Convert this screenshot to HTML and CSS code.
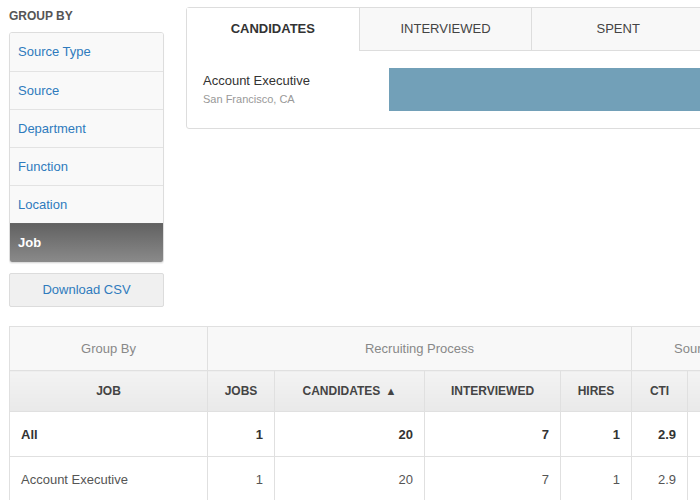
FILE: index.html
```html
<!DOCTYPE html>
<html>
<head>
<meta charset="utf-8">
<link rel="stylesheet" href="styles.css">
</head>
<body>
<div class="page">
  <div class="top">
    <aside class="sidebar">
      <h3 class="heading">GROUP BY</h3>
      <ul class="group-list">
        <li class="group-item">Source Type</li>
        <li class="group-item">Source</li>
        <li class="group-item">Department</li>
        <li class="group-item">Function</li>
        <li class="group-item">Location</li>
        <li class="group-item active">Job</li>
      </ul>
      <div class="btn">Download CSV</div>
    </aside>
    <section class="panel">
      <div class="tabs">
        <div class="tab active">CANDIDATES</div>
        <div class="tab">INTERVIEWED</div>
        <div class="tab">SPENT</div>
      </div>
      <div class="chart-row">
        <div class="chart-label">
          <div class="job-name">Account Executive</div>
          <div class="job-loc">San Francisco, CA</div>
        </div>
        <div class="bar"></div>
      </div>
    </section>
  </div>
  <table class="report">
    <colgroup>
      <col class="c-job"><col class="c-jobs"><col class="c-cand"><col class="c-int"><col class="c-hires"><col class="c-cti"><col class="c-next">
    </colgroup>
    <thead>
      <tr class="group-row">
        <th>Group By</th>
        <th colspan="4">Recruiting Process</th>
        <th colspan="2" class="left">Sourcing Efficiency</th>
      </tr>
      <tr class="head-row">
        <th>JOB</th>
        <th>JOBS</th>
        <th>CANDIDATES <span class="sort">&#9650;</span></th>
        <th>INTERVIEWED</th>
        <th>HIRES</th>
        <th>CTI</th>
        <th>CTH</th>
      </tr>
    </thead>
    <tbody>
      <tr class="total">
        <td class="name">All</td>
        <td>1</td>
        <td>20</td>
        <td>7</td>
        <td>1</td>
        <td>2.9</td>
        <td>20</td>
      </tr>
      <tr>
        <td class="name">Account Executive</td>
        <td>1</td>
        <td>20</td>
        <td>7</td>
        <td>1</td>
        <td>2.9</td>
        <td>20</td>
      </tr>
    </tbody>
  </table>
</div>
</body>
</html>
```
FILE: styles.css
```css
html, body {
  margin: 0;
  padding: 0;
  background: #fff;
  overflow: hidden;
}
body {
  font-family: "Liberation Sans", Arial, sans-serif;
  color: #333;
  width: 700px;
  height: 500px;
}
.page {
  padding: 7px 0 0 9px;
  width: 900px;
}
.top {
  display: flex;
  align-items: flex-start;
  gap: 22px;
}
.sidebar {
  width: 155px;
  flex: none;
  padding-top: 1px;
}
.heading {
  margin: 0 0 8px;
  font-size: 12px;
  line-height: 16px;
  font-weight: bold;
  color: #555;
}
.group-list {
  list-style: none;
  margin: 0;
  padding: 0;
  border: 1px solid #ddd;
  border-radius: 3px;
  overflow: hidden;
  box-shadow: 0 1px 1px rgba(0,0,0,0.06);
}
.group-item {
  height: 37px;
  line-height: 37px;
  padding: 0 8px;
  font-size: 13px;
  color: #2f7bbd;
  background: #f9f9f9;
  border-top: 1px solid #e3e3e3;
}
.group-item:first-child {
  border-top: none;
  height: 38px;
  line-height: 38px;
}
.group-item.active {
  height: 38px;
  line-height: 38px;
  background: linear-gradient(#626262, #8a8a8a);
  color: #fff;
  font-weight: bold;
  border-top-color: #666;
}
.btn {
  margin-top: 10px;
  height: 32px;
  line-height: 32px;
  text-align: center;
  font-size: 13px;
  color: #2f7bbd;
  background: #f0f0f0;
  border: 1px solid #dcdcdc;
  border-radius: 2px;
}
.panel {
  width: 517px;
  flex: none;
  border: 1px solid #ddd;
  border-radius: 3px;
  background: #fff;
}
.tabs {
  display: flex;
  height: 43px;
}
.tab {
  flex: 1;
  text-align: center;
  line-height: 42px;
  font-size: 13px;
  color: #444;
  background: #f8f8f8;
  border-bottom: 1px solid #ddd;
  border-left: 1px solid #ddd;
}
.tab.active {
  background: #fff;
  border-bottom-color: #fff;
  border-left: none;
  font-weight: bold;
  color: #333;
}
.chart-row {
  display: flex;
  align-items: center;
  padding: 17px 0 17px 16px;
}
.chart-label {
  width: 186px;
  flex: none;
}
.job-name {
  font-size: 13px;
  line-height: 17px;
  color: #333;
}
.job-loc {
  font-size: 11px;
  line-height: 16px;
  color: #999;
  margin-top: 2px;
}
.bar {
  flex: 1;
  height: 43px;
  background: #72a0b8;
}
.report {
  margin-top: 19px;
  border-collapse: collapse;
  table-layout: fixed;
  width: 800px;
  font-size: 13px;
}
.c-job { width: 198px; }
.c-jobs { width: 67px; }
.c-cand { width: 150px; }
.c-int { width: 136px; }
.c-hires { width: 71px; }
.c-cti { width: 56px; }
.c-next { width: 122px; }
.report th, .report td {
  border: 1px solid #e0e0e0;
  white-space: nowrap;
  overflow: hidden;
}
.group-row th {
  height: 41px;
  font-weight: normal;
  color: #888;
  background: #f8f8f8;
  text-align: center;
}
.group-row th.left {
  text-align: left;
  padding-left: 42px;
}
.head-row th {
  height: 38px;
  font-size: 12px;
  font-weight: bold;
  color: #444;
  background: linear-gradient(#f3f3f3, #e9e9e9);
  text-align: center;
}
.sort {
  font-size: 11px;
  vertical-align: 0;
  margin-left: 2px;
}
.report td {
  height: 44px;
  text-align: right;
  padding: 0 11px;
  color: #555;
}
.report td.name {
  text-align: left;
  padding-left: 11px;
}
.total td {
  font-weight: bold;
  color: #333;
}
```
